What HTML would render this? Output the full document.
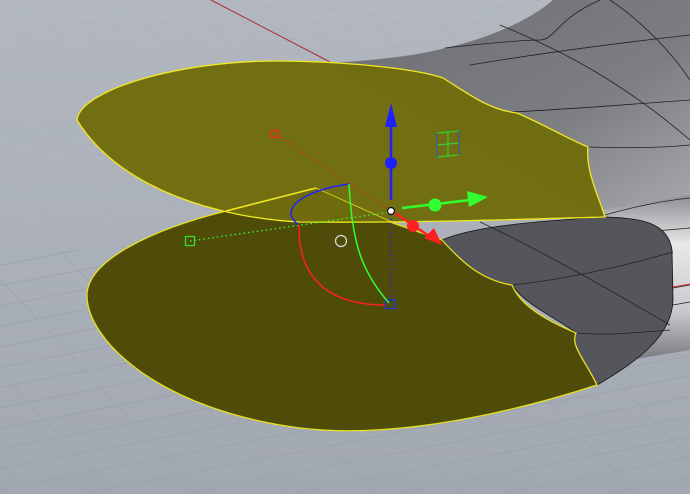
<!DOCTYPE html>
<html><head><meta charset="utf-8"><style>html,body{margin:0;padding:0;width:690px;height:494px;overflow:hidden;background:#a8aeb7}</style></head>
<body>
<svg width="690" height="494" viewBox="0 0 690 494" xmlns="http://www.w3.org/2000/svg">
<defs>
<linearGradient id="bg" x1="0" y1="0" x2="0" y2="1"><stop offset="0" stop-color="#b3b8c0"/><stop offset="1" stop-color="#a2a8b2"/></linearGradient>
<linearGradient id="gtop" x1="0" y1="0" x2="1" y2="1"><stop offset="0" stop-color="#6d6e72"/><stop offset="0.6" stop-color="#7d7e82"/><stop offset="1" stop-color="#a9aaae"/></linearGradient>
<linearGradient id="shine" x1="0" y1="0" x2="0" y2="1"><stop offset="0" stop-color="#8e8f93"/><stop offset="0.3" stop-color="#e8e8ea"/><stop offset="0.7" stop-color="#c9cacd"/><stop offset="1" stop-color="#7a7b80"/></linearGradient>
<pattern id="grid" width="75" height="20" patternUnits="userSpaceOnUse" patternTransform="rotate(-11) skewX(32)">
<path d="M0 0.5 H75 M0.5 0 V20" stroke="#99a0a9" stroke-width="0.7" fill="none"/>
</pattern>
<pattern id="gridf" width="30" height="12" patternUnits="userSpaceOnUse" patternTransform="rotate(-9) skewX(25)">
<path d="M0 0.5 H30 M0.5 0 V12" stroke="#a9afb8" stroke-width="0.6" fill="none"/>
</pattern>
</defs>
<rect width="690" height="494" fill="url(#bg)"/>
<rect width="690" height="250" fill="url(#gridf)"/>
<rect y="250" width="690" height="244" fill="url(#grid)"/>
<path d="M211 0 L330 62" stroke="#b03030" stroke-width="1"/>
<path d="M330 63 C380 60 420 55 445 48 C490 38 530 20 553 0 L690 0 L690 215 L605 217 Z" fill="url(#gtop)"/>
<path d="M600 210 L690 195 L690 350 L630 360 L600 300 Z" fill="url(#shine)"/>
<g stroke="#222" stroke-width="0.8" fill="none">
<path d="M445 48 C470 45 520 40 540 40 C555 40 555 20 600 0"/>
<path d="M470 65 C530 55 600 45 690 35"/>
<path d="M510 112 C560 110 620 105 690 100"/>
<path d="M588 147 C620 148 660 148 690 145"/>
<path d="M500 25 C560 50 620 80 690 140 M610 0 C640 20 670 50 690 80"/>
<path d="M605 215 C640 205 670 200 690 198 M610 235 L690 228"/>
</g>
<path d="M442 240 C470 228 520 222 605 217 C640 218 668 222 672 250 L673 300 C672 335 640 360 597 385 C585 360 570 345 576 333 C560 320 525 305 512 285 C480 280 460 260 442 240 Z" fill="#55565b" stroke="#111" stroke-width="0.8"/>
<g stroke="#222" stroke-width="0.8" fill="none">
<path d="M512 285 C560 280 610 270 673 252"/>
<path d="M576 333 C610 336 640 332 670 330"/>
<path d="M480 222 C540 250 610 290 670 325"/>
<path d="M673 288 L690 285 M673 305 L690 302"/>
</g>
<path d="M673 287 L690 284" stroke="#e03030" stroke-width="1"/>
<path d="M316 188 L226 211 C150 230 90 260 87 293 C85 340 160 410 300 428 C400 440 520 410 597 385 C585 360 570 345 576 333 C545 320 520 305 512 285 C480 280 460 260 442 240 L390 222 Z" fill="#4f4c0a" stroke="#e8e020" stroke-width="1.3"/>
<path d="M77 120 C80 90 180 60 282 61 C360 62 420 70 443 78 C470 95 490 110 517 113 C545 125 570 140 588 147 C585 170 600 200 605 217 C500 220 400 223 300 222 C220 218 120 190 77 120 Z" fill="#6f6c0c" stroke="#f0e820" stroke-width="1.3" fill-opacity="0.97"/>
<path d="M316 188 L226 211" stroke="#f0e820" stroke-width="1.6"/>
<path d="M316 188 L392 222 L442 240" stroke="#e0d820" stroke-width="0.8" fill="none"/>
<path d="M275 134 L391 211" stroke="#e02020" stroke-width="1.2" stroke-dasharray="1.5 4"/>
<rect x="271.5" y="130.5" width="7" height="7" fill="none" stroke="#ff2020" stroke-width="1.3"/>
<path d="M190 241 L391 212" stroke="#30ff30" stroke-width="1.3" stroke-dasharray="1.5 3"/>
<rect x="185.5" y="236.5" width="9" height="9" fill="none" stroke="#30e030" stroke-width="1.3"/>
<path d="M391 214 L391 302" stroke="#2020ff" stroke-width="1.3" stroke-dasharray="1.5 3"/>
<rect x="385.5" y="299.5" width="9" height="9" fill="none" stroke="#2030e0" stroke-width="1.3"/>
<path d="M349 184 C320 188 285 200 292 218 L298 225" stroke="#2020ff" stroke-width="1.5" fill="none"/>
<path d="M349 184 C352 240 360 270 389 303" stroke="#30ff30" stroke-width="1.5" fill="none"/>
<path d="M299 225 C298 270 320 305 385 305" stroke="#ff2020" stroke-width="1.5" fill="none"/>
<circle cx="341" cy="241" r="5.5" fill="none" stroke="#ddd" stroke-width="1.2"/>
<path d="M391 200 L391 125" stroke="#2020ff" stroke-width="2.5"/>
<path d="M391 103 L385 127 L397 127 Z" fill="#2020ff"/>
<circle cx="391" cy="163" r="6" fill="#2020ff"/>
<path d="M402 208 L470 200" stroke="#30ff30" stroke-width="2.5"/>
<path d="M488 197 L467 191 L469 207 Z" fill="#30ff30"/>
<circle cx="435" cy="205" r="6.5" fill="#30ff30"/>
<path d="M395 213 L432 238" stroke="#ff2020" stroke-width="2.5"/>
<path d="M442 245 L424 238 L434 228 Z" fill="#ff2020"/>
<circle cx="413" cy="226" r="6" fill="#ff2020"/>
<circle cx="391" cy="211" r="3.5" fill="#fff" stroke="#111" stroke-width="1.3"/>
<g stroke="#30d030" stroke-width="1.2" fill="none"><path d="M437 133 L459 131 L459 155 L437 157 Z M448 132 L448 156 M437 145 L459 143"/></g>
<path d="M437 133 L437 157 M459 131 L459 155" stroke="#3040d0" stroke-width="1"/>
</svg>
</body></html>
